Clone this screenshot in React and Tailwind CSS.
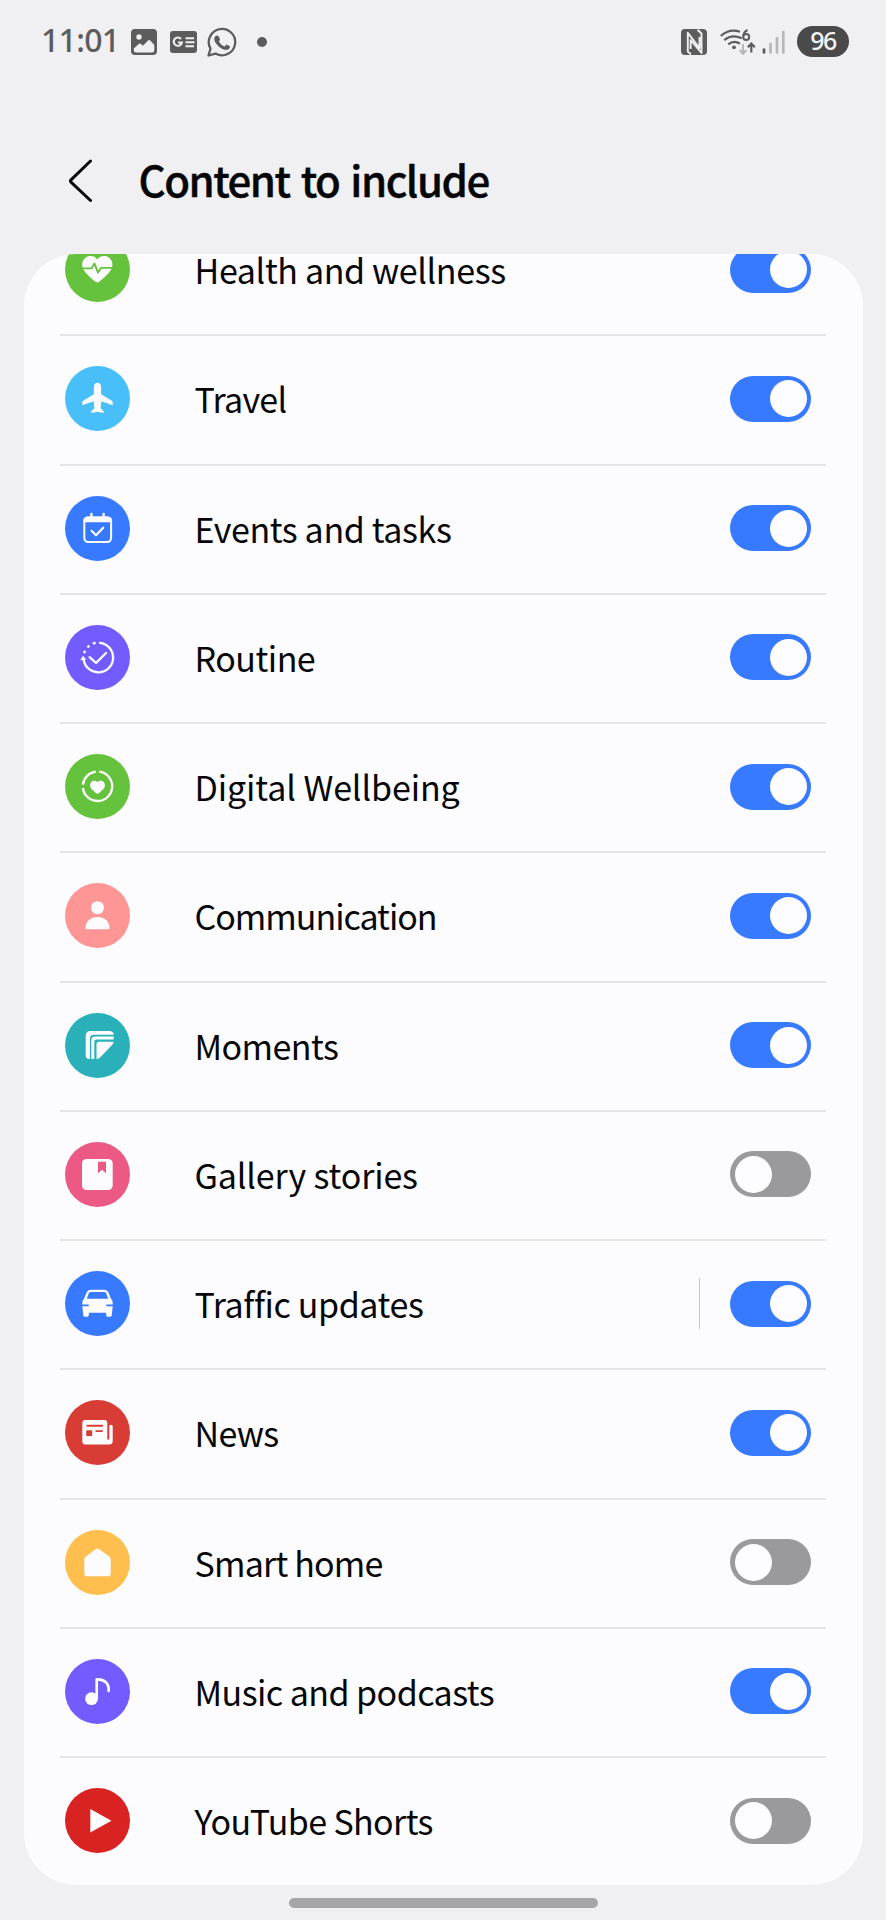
import React from "react";

const W = "#fcfcff";

const icons = {
  health: (
    <>
      <path fill={W} d="M32.3 22.6C29.5 18.2 23.600 18.200 20.200 20.900C16.600 23.900 16.200 29 18.900 33.200C20.800 36.300 26.500 41.500 30 44.400Q32.300 46.100 34.600 44.400C38 41.500 43.800 36.300 45.700 33.200C48.400 29 48 23.900 44.400 20.900C41 18.200 35.100 18.200 32.300 22.600Z" />
      <path fill="none" stroke="#65c23c" strokeWidth="1.900" strokeLinejoin="round" d="M16 31.400H26.500L29.500 26.600L33 35.600L36 30.900H49" />
    </>
  ),
  travel: (
    <path fill={W} d="M32.500 16.700C34.900 16.700 36.100 18.600 36.100 21V28.300L46.500 34.600Q47.700 35.300 47.700 36.600V39.300L36.400 35.200L35.600 42.200L38.600 45.300V47L32.500 45.700L26.400 47V45.300L29.400 42.200L28.600 35.200L17.300 39.300V36.600Q17.300 35.300 18.500 34.600L28.900 28.300V21C28.900 18.600 30.100 16.700 32.500 16.700Z" />
  ),
  events: (
    <>
      <rect x="19.300" y="21.400" width="26.800" height="24.700" rx="4" fill="none" stroke={W} strokeWidth="2" />
      <path fill={W} d="M18.300 26.300V25Q18.300 20.400 23 20.400H42.400Q47.100 20.400 47.100 25V26.300Z" />
      <path fill="none" stroke={W} strokeWidth="2.400" strokeLinecap="round" d="M26.400 18V22M38.600 18V22" />
      <path fill="none" stroke={W} strokeWidth="2.200" strokeLinecap="round" strokeLinejoin="round" d="M26.600 34.800L31 39.200L38.200 31.700" />
    </>
  ),
  routine: (
    <>
      <path fill="none" stroke={W} strokeWidth="2.300" strokeLinecap="round" d="M35 17.900A14.800 14.800 0 1 1 18.700 35" />
      <path fill={W} d="M15.200 35.200L18 30.800L21.300 34.700Z" />
      <g fill={W}>
        <rect x="-1.200" y="-1.200" width="2.600" height="2.400" transform="translate(19.500 27) rotate(-65)" />
        <rect x="-1.200" y="-1.200" width="2.600" height="2.400" transform="translate(23.300 21.600) rotate(-42)" />
        <rect x="-1.200" y="-1.200" width="2.800" height="2.400" transform="translate(29 18.200) rotate(-16)" />
      </g>
      <path fill="none" stroke={W} strokeWidth="2.300" strokeLinecap="round" strokeLinejoin="round" d="M24.600 32.200L31 38L41 28" />
    </>
  ),
  wellbeing: (
    <>
      <path fill="none" stroke={W} strokeWidth="2.300" d="M34.200 17.700A14.700 14.700 0 1 1 17.900 34M17.900 30.600A14.700 14.700 0 0 1 30.800 17.700" />
      <path fill={W} d="M32.500 28.300C30.900 26.200 27.700 26.400 26.200 28.200C24.600 30 24.700 32.700 26.200 34.500C27.600 36.300 29.800 38 31.200 39.200Q32.500 40.100 33.800 39.200C35.200 38 37.400 36.300 38.800 34.500C40.300 32.700 40.400 30 38.800 28.200C37.300 26.400 34.100 26.200 32.500 28.300Z" />
    </>
  ),
  communication: (
    <>
      <circle cx="32.500" cy="24.700" r="6.500" fill={W} />
      <path fill={W} d="M20.500 45.300C20.500 38.500 25.500 34 32.500 34S44.500 38.500 44.500 45.300Q44.500 46.300 43.500 46.300H21.500Q20.500 46.300 20.500 45.300Z" />
    </>
  ),
  moments: (
    <>
      <path fill={W} d="M20.700 42.500V23Q20.700 18 25.700 18H44Q48.700 18 48.700 21.700H29.300Q24.900 21.700 24.900 26.100V46Q20.700 46 20.700 42.500Z" />
      <path fill={W} d="M26.300 46V27.400Q26.300 23.600 30.100 23.600H48.700V26.500H31.600Q29.300 26.500 29.300 28.800V46Z" />
      <path fill={W} d="M31.500 46V31.300Q31.500 28.800 34 28.800H48.500Q48.300 31 46.600 32.500L35 44.400Q33.500 46 31.500 46Z" />
    </>
  ),
  gallery: (
    <>
      <rect x="17" y="17" width="30.700" height="31" rx="4.500" fill={W} />
      <path fill="#eb5984" d="M33 19.700H41V31.300L37 27.800L33 31.300Z" />
    </>
  ),
  traffic: (
    <path fill={W} fillRule="evenodd" d="M25.500 18.700H39.500Q42.200 18.700 43.300 21.200L46 27.800Q47.700 29.300 47.700 32V33.400H41.300V35.200H47.700L46.700 44.200Q46.500 45.700 45 45.700H42.900Q41.400 45.700 41.300 44.200L41 41.700H24L23.700 44.200Q23.600 45.700 22.100 45.700H20Q18.500 45.700 18.300 44.200L17.300 35.200H23.700V33.400H17.300V32Q17.300 29.300 19 27.800L21.700 21.200Q22.800 18.700 25.500 18.700ZM25.800 20.900Q24.300 20.900 23.800 22.300L21.800 27.800H43.200L41.200 22.300Q40.700 20.900 39.200 20.900Z" />
  ),
  news: (
    <>
      <path fill={W} d="M20.300 20H39.300Q42.300 20 42.300 23V39.500H44.300V26.500Q44.300 24.800 46 24.800T47.700 26.500V41.300Q47.700 44.400 44.600 44.400H20.300Q17.300 44.400 17.300 41.400V23Q17.300 20 20.300 20Z" />
      <path fill="none" stroke="#d83c35" strokeWidth="1.900" strokeLinecap="round" d="M22.300 25.700H37.300M31.200 31.100H37" />
      <rect x="21.200" y="30.200" width="6" height="5.900" rx=".8" fill="#d83c35" />
    </>
  ),
  home: (
    <path fill={W} d="M31 18.900Q32.500 17.900 34 18.900L44.200 26.500Q45.700 27.700 45.700 29.500V43.400Q45.700 46.300 42.800 46.300H22.200Q19.300 46.300 19.300 43.400V29.500Q19.300 27.700 20.800 26.500Z" />
  ),
  music: (
    <>
      <circle cx="26.500" cy="39.700" r="6.400" fill={W} />
      <path fill="none" stroke={W} strokeWidth="2.700" strokeLinecap="round" strokeLinejoin="round" d="M31.700 39.500V20.300C39.500 20 44.300 24.500 43.600 32" />
    </>
  ),
  youtube: <path fill="#fff" d="M25.300 21L46.400 32.700L25.300 44.400Z" />,
};

const rows = [
  { icon: "health", label: "Health and wellness", bg: "bg-[#65c23c]", track: "tracking-[-0.36px]", on: true },
  { icon: "travel", label: "Travel", bg: "bg-[#48bff9]", track: "tracking-[-0.7px]", on: true },
  { icon: "events", label: "Events and tasks", bg: "bg-[#387aff]", track: "tracking-[-0.38px]", on: true },
  { icon: "routine", label: "Routine", bg: "bg-[#735cff]", track: "tracking-[-0.5px]", on: true },
  { icon: "wellbeing", label: "Digital Wellbeing", bg: "bg-[#65c23c]", track: "tracking-[-0.1px]", on: true },
  { icon: "communication", label: "Communication", bg: "bg-[#ff9696]", track: "tracking-[-1px]", on: true },
  { icon: "moments", label: "Moments", bg: "bg-[#29b0b9]", track: "tracking-[-0.55px]", on: true },
  { icon: "gallery", label: "Gallery stories", bg: "bg-[#eb5984]", track: "tracking-[-0.15px]", on: false },
  { icon: "traffic", label: "Traffic updates", bg: "bg-[#387aff]", track: "tracking-[-0.4px]", on: true, split: true },
  { icon: "news", label: "News", bg: "bg-[#d83c35]", track: "tracking-[-0.7px]", on: true },
  { icon: "home", label: "Smart home", bg: "bg-[#ffbf4f]", track: "tracking-[-0.8px]", on: false },
  { icon: "music", label: "Music and podcasts", bg: "bg-[#735cff]", track: "tracking-[-0.55px]", on: true },
  { icon: "youtube", label: "YouTube Shorts", bg: "bg-[#d92323]", track: "tracking-[-0.6px]", on: false },
];

function Toggle({ on }) {
  return (
    <button
      role="switch"
      aria-checked={on}
      className={
        "flex h-[46px] w-[81px] shrink-0 items-center rounded-full " +
        (on ? "justify-end bg-[#387aff] pr-1" : "justify-start bg-[#99999e] pl-[5px]")
      }
    >
      <span className="size-[37px] rounded-full bg-[#fdfdff]" />
    </button>
  );
}

function Row({ icon, label, bg, track, on, split, last }) {
  return (
    <li
      className={
        "flex h-[129.250px] shrink-0 items-center border-b-2 pr-[15px] pb-[2px] pl-[5px] " +
        (last ? "border-transparent" : "border-[#e4e4e7]")
      }
    >
      <span className={"size-[65px] shrink-0 rounded-full " + bg}>
        <svg viewBox="0 0 65 65" className="size-[65px]">{icons[icon]}</svg>
      </span>
      <span className={"ml-[64.500px] flex-1 pt-[1px] text-[34px] leading-[34px] whitespace-nowrap text-[#060608] " + track}>{label}</span>
      {split && <span className="mr-[30px] h-[51px] w-px bg-[#c6c6ca]" />}
      <Toggle on={on} />
    </li>
  );
}

function StatusBar() {
  return (
    <div className="flex h-[83px] items-center pr-[37px] pl-[41px] text-[#5c5c5d]">
      <span className="w-[90px] pb-[3px] font-['Noto_Sans',sans-serif] text-[32px] leading-[44px] font-medium tracking-[-0.7px]">11:01</span>
      <svg viewBox="0 0 26 26" className="size-[26px]">
        <rect width="26" height="26" rx="4" fill="currentColor" />
        <circle cx="8" cy="8" r="2.700" fill="#f0f0f2" />
        <path fill="#f0f0f2" d="M2.800 19.500L8 14.800Q9 14 10 14.900L12 16.800L17 11.600Q18.200 10.600 19.300 11.600L23.300 16V21Q23.300 23.500 20.800 23.500H5.300Q2.800 23.500 2.800 21Z" />
      </svg>
      <svg viewBox="0 0 27 22" className="ml-[12.500px] h-[22px] w-[27px]">
        <rect width="27" height="22" rx="3" fill="currentColor" />
        <path fill="none" stroke="#f0f0f2" strokeWidth="2.100" d="M11 8A4.100 4.100 0 1 0 11.900 11.500H8M15.500 7.200H24M15.500 11.200H24.500M15.500 15.200H24" />
      </svg>
      <svg viewBox="0 0 30 30" className="ml-[10px] size-[30px]">
        <path fill="none" stroke="currentColor" strokeWidth="2.300" strokeLinejoin="round" d="M1.500 28.500L3.500 21.600A13.200 13.200 0 1 1 8.500 26.600Z" />
        <path fill="currentColor" d="M8.300 9.300Q10 7.800 11.400 9L13 12.300Q13.100 13 11.800 14.500Q14 18.300 17.600 19.400L19.500 17.500L22.800 19.200Q23.500 20.200 21.900 21.900C19.500 24 15 22.400 12 19.700C9 17 5.500 12.500 8.300 9.300Z" />
      </svg>
      <span className="ml-[20.500px] size-[10px] rounded-full bg-[#5c5c5d]" />
      <span className="flex-1" />
      <svg viewBox="0 0 26 26" className="size-[26px]">
        <rect width="26" height="26" rx="4" fill="#5c5c5d" />
        <path fill="none" stroke="#f0f0f2" strokeWidth="1.900" strokeLinejoin="round" d="M10 25.500L6.800 22.500V3.800L18.500 19V8M16.500 .8L20.500 4.500V24L9.600 11V20" />
      </svg>
      <svg viewBox="0 0 36 30" className="ml-[13px] h-[30px] w-[36px]">
        <g fill="none" stroke="#5c5c5d" strokeWidth="2.200">
          <path d="M.8 9Q9.500 1.200 20 4.800M4.300 13.200Q12 6.800 21.600 11.300M8.300 17.300Q13.800 12.800 20 16.600" />
          <path strokeWidth="2" d="M27.600 3Q23.200 5 23.200 10" />
          <circle cx="26.200" cy="10" r="3" strokeWidth="2" />
          <path d="M31.300 25.500V17M27.800 20.200L31.300 16.500L34.800 20.200" />
        </g>
        <path fill="none" stroke="#b7b7b9" strokeWidth="2" d="M23 17V26.500M19.600 23L23 26.800L26.400 23" />
        <circle cx="14" cy="20.300" r="1.900" fill="#5c5c5d" />
      </svg>
      <svg viewBox="0 0 24 26" className="ml-[6px] h-[26px] w-[24px]">
        <path fill="none" stroke="#b7b7b9" strokeWidth="2.700" strokeLinecap="round" d="M8.500 15V23.500M15 9V23.500M21.300 3V23.500" />
        <path fill="none" stroke="#5c5c5d" strokeWidth="2.700" strokeLinecap="round" d="M2 20.500V23.500" />
      </svg>
      <span className="ml-[11px] flex h-[31px] w-[52px] items-center justify-center rounded-full bg-[#4a4a4b] pb-[2px] font-['Noto_Sans',sans-serif] text-[25px] leading-[29px] font-medium tracking-[-1.5px] text-[#f5f5f7]">96</span>
    </div>
  );
}

export default function App() {
  return (
    <div className="flex h-[1920px] w-[886px] flex-col overflow-hidden bg-[#f0f0f2] font-['Noto_Sans_CJK_KR',sans-serif]">
      <StatusBar />
      <header className="flex h-[171px] items-center pt-[24px] pl-[69px]">
        <svg viewBox="0 0 24 44" className="h-[44px] w-[24px]">
          <path fill="none" stroke="#08080a" strokeWidth="3" strokeLinecap="round" strokeLinejoin="round" d="M21.500 2L2 20.800Q1 22 2 23.200L21.500 41.500" />
        </svg>
        <h1 className="ml-[45.500px] pb-[4px] text-[42px] leading-[60px] font-medium tracking-[-1.5px] whitespace-nowrap text-[#060608] [-webkit-text-stroke:0.4px_#060608] [word-spacing:3px]">Content to include</h1>
      </header>
      <main className="mr-[23.500px] ml-[23.500px] h-[1631px] overflow-hidden rounded-[52px] bg-[#fcfcff] px-[36.500px]">
        <ul className="-mt-[47px] flex flex-col">
          {rows.map((r, i) => (
            <Row key={r.label} {...r} last={i === rows.length - 1} />
          ))}
        </ul>
      </main>
      <div className="mt-[13px] flex justify-center">
        <span className="h-[10px] w-[309px] rounded-full bg-[#a5a5a7]" />
      </div>
    </div>
  );
}
